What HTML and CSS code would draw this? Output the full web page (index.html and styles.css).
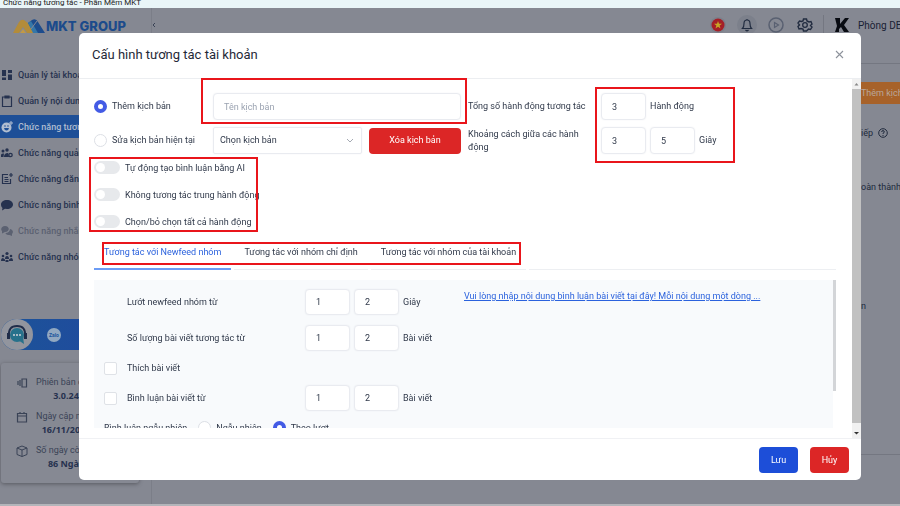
FILE: index.html
```html
<!DOCTYPE html>
<html lang="vi">
<head>
<meta charset="UTF-8">
<meta name="viewport" content="width=device-width, initial-scale=1.0">
<title>Chức năng tương tác - Phần Mềm MKT</title>
<link rel="stylesheet" href="styles.css">
</head>
<body>
<div class="titlebar"><span>Chức năng tương tác - Phần Mềm MKT</span></div>
<div class="app">
<aside class="sidebar">
<div class="logo">
<svg width="32" height="15" viewBox="0 0 32 15"><path d="M0 14L6 3Q8 0 11 1L16 5 21 14H14L10 8 6 14z" fill="#b38c3a"/><path d="M7 14L10 10 13 14z" fill="#c29a45"/><path d="M15 4L19 1Q23-1 25 3L32 14H21z" fill="#1d4c8d"/><path d="M15 4L18 2 25 14H20z" fill="#3577a8"/><path d="M18 10L24 2" stroke="#858892" stroke-width="1"/></svg>
<span>MKT GROUP</span>
</div>
<nav class="menu">
<a href="#"><svg viewBox="0 0 12 12"><path d="M1 1h4v6H1zM7 1h4v3H7zM7 5.500h4V11H7zM1 8.500h4V11H1z" fill="currentColor"/></svg>Quản lý tài khoản</a>
<a href="#"><svg viewBox="0 0 12 12"><path d="M1.500 2h9v9.500h-9zM4 2V1h4v2H4z" fill="none" stroke="currentColor" stroke-width="1.200"/></svg>Quản lý nội dung</a>
<a href="#" class="active"><svg viewBox="0 0 12 12"><circle cx="5.500" cy="6.500" r="5" fill="currentColor"/><path d="M3 7h5q-.5 2.500-2.500 2.500T3 7z" fill="#1e4f97"/><circle cx="4" cy="5" r=".8" fill="#1e4f97"/><circle cx="7" cy="5" r=".8" fill="#1e4f97"/><path d="M10 0v4M8 2h4" stroke="currentColor"/></svg>Chức năng tương tác</a>
<a href="#"><svg viewBox="0 0 12 12"><g fill="currentColor"><circle cx="2" cy="4" r="1.500"/><circle cx="6" cy="3" r="1.700"/><path d="M0 10V8q0-2 3-1.500L2.500 10zM3 10q0-4 4-4l1 4z"/></g><circle cx="9.500" cy="8" r="1.700" fill="none" stroke="currentColor" stroke-width="1.300"/></svg>Chức năng quản lý</a>
<a href="#"><svg viewBox="0 0 12 12"><path d="M7 1.500H1.500v9h8V6M3.500 4.500H7M3.500 6.500h4M3.500 8.500h4M10 0v4M8 2h4" fill="none" stroke="currentColor" stroke-width="1.200"/></svg>Chức năng đăng bài</a>
<a href="#"><svg viewBox="0 0 12 12"><path d="M6 1c3.500 0 6 2 6 4.500S9.500 10 6 10l-2-.3L1 11.500 1.500 9C.5 8 0 7 0 5.500 0 3 2.500 1 6 1z" fill="currentColor"/></svg>Chức năng bình luận</a>
<a href="#" class="disabled"><svg viewBox="0 0 12 12"><path d="M4 1c5 0 5 6 0 6L1 8.500 1 6C-1 4 1 1 4 1z" fill="currentColor"/><path d="M9 4c4 1 3 4 2 5v2L8.500 10Q5 10 4.500 8 8.500 8 9 4z" fill="currentColor"/></svg>Chức năng nhắn tin</a>
<a href="#"><svg viewBox="0 0 12 12"><g fill="currentColor"><circle cx="6" cy="2.500" r="1.600"/><circle cx="2" cy="5" r="1.300"/><circle cx="10" cy="5" r="1.300"/><path d="M4 8q0-3 2-3t2 3zM0 10q0-3 2-3l2 1.500V10zM12 10q0-3-2-3L8 8.500V10zM4.500 9h3v2h-3z"/></g></svg>Chức năng nhóm</a>
</nav>
<div class="contact">
<span class="support"><svg width="22" height="22" viewBox="0 0 22 22"><path d="M3 12Q2 2 11 2t8 10" fill="none" stroke="#202d49" stroke-width="2"/><circle cx="11" cy="11" r="7" fill="#27718b"/><path d="M12 16l6 4-1-7z" fill="#27718b"/><path d="M1 9h3v6H1zM18 9h3v6h-3z" fill="#202d49"/><path d="M7 11h2M10 11h2M13 11h2" stroke="#a6b9c4" stroke-width="2"/></svg></span>
<span class="zalo">Zalo</span>
</div>
<dl class="info">
<div><dt><svg viewBox="0 0 12 12"><path d="M6 2h4.500v8H6zM4 3v6M2 4v4" fill="none" stroke="currentColor" stroke-width="1.200"/></svg>Phiên bản của bạn</dt><dd>3.0.24</dd></div>
<div><dt><svg viewBox="0 0 12 12"><path d="M1.500 2.500h9v8.500h-9zM1.500 5h9M4 1v2M8 1v2" fill="none" stroke="currentColor" stroke-width="1.200"/></svg>Ngày cập nhật</dt><dd>16/11/2023</dd></div>
<div><dt><svg viewBox="0 0 12 12"><path d="M1 3l5-2 5 2v6.500L6 11.500 1 9.500zM1 3l5 2 5-2M6 5v6.500" fill="none" stroke="currentColor"/></svg>Số ngày còn lại</dt><dd>86 Ngày</dd></div>
</dl>
</aside>
<main class="content">
<header class="topbar">
<span class="collapse"><svg width="4" height="6" viewBox="0 0 4 6"><path d="M3 1L1 3l2 2" fill="none" stroke="#3a4356"/></svg></span>
<div class="actions">
<svg viewBox="0 0 20 20"><circle cx="10" cy="10" r="8" fill="#7c808b"/><circle cx="10" cy="10" r="6.500" fill="#a51f27"/><path d="M10 6l1 2.800h3l-2.400 1.700.9 2.900L10 11.700l-2.500 1.700.9-2.900L6 8.800h3z" fill="#c7a625"/></svg>
<svg viewBox="0 0 20 20"><circle cx="10" cy="10" r="10" fill="#7c808b"/><path d="M5.500 13.500q1.500-1.500 1.500-5Q7 5 10 5t3 3.500q0 3.500 1.500 5zM8.500 15q1.500 1.500 3 0M10 4v1" fill="none" stroke="#222c40" stroke-width="1.200"/></svg>
<svg viewBox="0 0 20 20"><circle cx="10" cy="10" r="7" fill="none" stroke="#596071" stroke-width="1.500"/><path d="M8.500 7.500l4 2.500-4 2.500z" fill="none" stroke="#596071" stroke-width="1.200"/></svg>
<svg viewBox="0 0 20 20"><path d="M8.500 4h3l.5 2 2 1 2-.5 1 2.500-1.500 1.500L17 12l-1.500 2.500-2-.5L11.500 16h-3L8 14l-2-.5-2 .5L3 11.500 4.500 10 3 8l1.500-2 2 .5 1.500-.5z" fill="none" stroke="#222c40" stroke-width="1.400"/><circle cx="10" cy="10" r="2.300" fill="none" stroke="#222c40" stroke-width="1.300"/></svg>
</div>
<div class="account">
<svg width="14" height="16" viewBox="0 0 14 16"><path d="M0 1h5v6l5-6h4L9 8l5 7h-5L6 10l-2 2v3H0l2-6z" fill="#080b12"/></svg>
<span>Phòng DEV</span>
</div>
</header>
<div class="page">
<button class="add">Thêm kịch bản</button>
<p class="step">iếp <svg width="10" height="10" viewBox="0 0 10 10"><circle cx="5" cy="5" r="4.300" fill="none" stroke="currentColor"/><path d="M3.700 4q0-1.400 1.300-1.400T6.300 4Q6.300 4.700 5 5.300V6M5 7v1" fill="none" stroke="currentColor"/></svg></p>
<p class="state">oàn thành</p>
<p class="cell">n</p>
</div>
</main>
</div>

<div class="overlay">
<section class="modal" role="dialog" aria-labelledby="modalTitle">
<header class="modal-header">
<h1 id="modalTitle">Cấu hình tương tác tài khoản</h1>
<button class="close" aria-label="Đóng"><svg width="9" height="9" viewBox="0 0 9 9"><path d="M1 1l7 7M8 1L1 8" stroke="#8d929b" stroke-width="1.100"/></svg></button>
</header>
<div class="modal-body">
<div class="form">
<div class="script-grid">
<label class="choice"><input type="radio" name="mode" checked>Thêm kịch bản</label>
<div class="name-field marked"><input class="text" type="text" placeholder="Tên kịch bản" aria-label="Tên kịch bản"></div>
<label for="total">Tổng số hành động tương tác</label>
<div class="numbers limits marked"><input class="text" id="total" type="text" value="3"><span>Hành động</span></div>
<label class="choice"><input type="radio" name="mode">Sửa kịch bản hiện tại</label>
<div class="pick">
<select aria-label="Chọn kịch bản"><option>Chọn kịch bản</option></select>
<button class="btn red">Xóa kịch bản</button>
</div>
<label for="delayFrom">Khoảng cách giữa các hành động</label>
<div class="numbers"><input class="text" id="delayFrom" type="text" value="3"><input class="text" type="text" value="5" aria-label="Khoảng cách đến"><span>Giây</span></div>
</div>
<div class="switches marked">
<label><input type="checkbox" class="switch">Tự động tạo bình luận bằng AI</label>
<label><input type="checkbox" class="switch">Không tương tác trung hành động</label>
<label><input type="checkbox" class="switch">Chọn/bỏ chọn tất cả hành động</label>
</div>
<div class="tabs marked" role="tablist">
<button role="tab" class="selected" aria-selected="true">Tương tác với Newfeed nhóm</button>
<button role="tab">Tương tác với nhóm chỉ định</button>
<button role="tab">Tương tác với nhóm của tài khoản</button>
<span class="rest"></span>
</div>
<div class="panel-wrap">
<div class="panel">
<div class="settings">
<div class="setting"><i></i><label for="feed">Lướt newfeed nhóm từ</label><div class="numbers"><input class="text" id="feed" type="text" value="1"><input class="text" type="text" value="2" aria-label="Lướt newfeed nhóm đến"><span>Giây</span></div></div>
<div class="setting"><i></i><label for="posts">Số lượng bài viết tương tác từ</label><div class="numbers"><input class="text" id="posts" type="text" value="1"><input class="text" type="text" value="2" aria-label="Số lượng bài viết đến"><span>Bài viết</span></div></div>
<div class="setting short"><input type="checkbox" id="like"><label for="like">Thích bài viết</label></div>
<div class="setting"><input type="checkbox" id="comment"><label for="comment">Bình luận bài viết từ</label><div class="numbers"><input class="text" type="text" value="1" aria-label="Bình luận từ"><input class="text" type="text" value="2" aria-label="Bình luận đến"><span>Bài viết</span></div></div>
<div class="order"><span>Bình luận ngẫu nhiên</span><label><input type="radio" name="order">Ngẫu nhiên</label><label><input type="radio" name="order" checked>Theo lượt</label></div>
</div>
<a href="#" class="hint">Vui lòng nhập nội dung bình luận bài viết tại đây! Mỗi nội dung một dòng ...</a>
</div>
<div class="panel-thumb"></div>
</div>
</div>
<div class="scrollbar">
<svg viewBox="0 0 9 9"><path d="M2.500 6L4.500 3.500 6.500 6z" fill="#888"/></svg>
<div class="thumb"></div>
<svg viewBox="0 0 9 9"><path d="M2 3.500h5L4.500 6z" fill="#333"/></svg>
</div>
</div>
<footer class="modal-footer">
<button class="btn blue">Lưu</button>
<button class="btn red">Hủy</button>
</footer>
</section>
</div>
</body>
</html>
```
FILE: styles.css
```css
*, *::before, *::after {
    box-sizing: border-box;
}
body {
    margin: 0;
    height: 100vh;
    display: flex;
    flex-direction: column;
    overflow: hidden;
    font-family: Roboto, "Noto Sans", sans-serif;
    font-size: 9px;
    color: #30394a;
    background-color: #858892;
}
input, button, select {
    font: inherit;
    color: inherit;
    margin: 0;
}
button {
    border: none;
    background: none;
    padding: 0;
    cursor: pointer;
}
p, dl, dd, h1 {
    margin: 0;
}

/* window title */
.titlebar {
    height: 8px;
    display: flex;
    align-items: flex-end;
    padding-left: 3px;
    overflow: hidden;
    background-color: #e9f5f8;
    color: #222;
    font-size: 8px;
    line-height: 10px;
}
.app {
    flex: 1;
    display: flex;
    min-height: 0;
    border-bottom: 2px solid #b3b5ba;
}

/* sidebar */
.sidebar {
    width: 152px;
    flex-shrink: 0;
    border-right: 1px solid #7b7e88;
    color: #26324f;
}
.logo {
    display: flex;
    align-items: center;
    height: 36px;
    padding-left: 13px;
    gap: 1px;
    font-family: Inter, sans-serif;
    font-size: 13px;
    font-weight: 800;
    color: #1c4b8b;
    white-space: nowrap;
}
.menu {
    display: flex;
    flex-direction: column;
    gap: 3px;
    padding-top: 19px;
}
.menu a {
    display: flex;
    align-items: center;
    height: 23px;
    gap: 5px;
    padding-left: 1px;
    color: #26324f;
    font-weight: 500;
    text-decoration: none;
    white-space: nowrap;
}
.menu svg {
    width: 12px;
    height: 12px;
}
.menu a.active {
    background-color: #1e4f97;
    color: #b0bdd0;
}
.menu a.disabled {
    color: #5b6171;
}
.contact {
    display: flex;
    align-items: center;
    gap: 14px;
    width: 138px;
    height: 31px;
    margin: 51px 0 0 1px;
    border-radius: 16px;
    background: linear-gradient(90deg, #1c5398, #2148a0);
}
.support {
    display: flex;
    align-items: center;
    justify-content: center;
    width: 32px;
    height: 31px;
    border-radius: 50%;
    background-color: #92959e;
}
.zalo {
    width: 14px;
    height: 14px;
    border-radius: 50%;
    background-color: #91a8c1;
    color: #20559c;
    font-size: 5px;
    font-weight: bold;
    line-height: 14px;
    text-align: center;
}
.info {
    display: flex;
    flex-direction: column;
    gap: 7px;
    width: 138px;
    margin: 13px 0 0 1px;
    padding: 13px 0 12px 15px;
    border-radius: 3px;
    background-color: #868993;
    box-shadow: 0 1px 4px rgba(0, 0, 0, 0.35);
    line-height: 13px;
}
.info dt {
    display: flex;
    align-items: center;
    gap: 8px;
    color: #3a4356;
    white-space: nowrap;
}
.info svg {
    width: 12px;
    height: 12px;
}
.info dd {
    padding-right: 23px;
    font-family: "Noto Sans", sans-serif;
    font-weight: bold;
    text-align: center;
    line-height: 14px;
}

/* page behind the modal */
.content {
    flex: 1;
    display: flex;
    flex-direction: column;
}
.topbar {
    display: flex;
    height: 56px;
    border-bottom: 1px solid #747781;
    padding-top: 7px;
}
.collapse {
    flex: 1;
    line-height: 20px;
}
.actions {
    display: flex;
    gap: 9px;
    padding-right: 8px;
    height: 20px;
}
.actions svg {
    width: 20px;
    height: 20px;
}
.account {
    display: flex;
    align-items: center;
    gap: 9px;
    width: 77px;
    height: 20px;
    padding-left: 11px;
    border-left: 1px solid #747781;
    font-size: 10px;
    color: #182033;
    white-space: nowrap;
    overflow: hidden;
}
.account svg {
    flex-shrink: 0;
}
.page {
    align-self: flex-end;
    display: flex;
    flex-direction: column;
    width: 39px;
    height: 391px;
    padding-top: 18px;
    border-bottom: 1px solid #747781;
    white-space: nowrap;
    overflow: hidden;
    color: #202a3d;
}
.add {
    height: 22px;
    background-color: #a7622a;
    color: #b9a79b;
    text-align: left;
}
.step {
    display: flex;
    align-items: center;
    gap: 5px;
    height: 57px;
}
.state {
    height: 52px;
    line-height: 52px;
}
.cell {
    margin-top: 82px;
    line-height: 22px;
}

/* modal */
.overlay {
    position: fixed;
    inset: 0;
    display: flex;
    padding: 33px 39px 26px 79px;
}
.modal {
    flex: 1;
    display: flex;
    flex-direction: column;
    min-width: 0;
    border-radius: 5px;
    background-color: #fff;
}
.modal-header {
    display: flex;
    justify-content: space-between;
    align-items: center;
    height: 46px;
    padding: 0 17px 2px 13px;
    border-bottom: 1px solid #eceef1;
}
.modal-header h1 {
    font-size: 13px;
    font-weight: 400;
    color: #1f2937;
}
.close {
    display: flex;
}
.modal-body {
    flex: 1;
    display: flex;
    min-height: 0;
}
.form {
    flex: 1;
    display: flex;
    flex-direction: column;
    min-width: 0;
    padding: 14px 16px 10px 15px;
}
.scrollbar {
    width: 9px;
    display: flex;
    flex-direction: column;
    background-color: #f1f1f1;
}
.scrollbar svg {
    width: 9px;
    height: 10px;
}
.scrollbar .thumb {
    flex: 1;
    margin-bottom: 5px;
    background-color: #c1c1c1;
}

/* red frames */
.marked {
    position: relative;
}
.marked::after {
    content: "";
    position: absolute;
    border: 2px solid #e9151b;
    pointer-events: none;
}
.name-field::after {
    inset: -15px -6px -4px -12px;
}
.limits::after {
    inset: -6px auto -43px -6px;
    width: 140px;
}
.switches::after {
    inset: 3px auto 3px -5px;
    width: 169px;
}
.tabs::after {
    inset: 7px auto 5px 8px;
    width: 419px;
}

/* form controls */
.text, select {
    height: 27px;
    border: 1px solid #e9ebf0;
    border-radius: 4px;
    background-color: #fff;
    box-shadow: 0 0 2px rgba(40, 50, 80, 0.06);
}
.text {
    width: 45px;
    padding: 0 10px;
}
.text::placeholder {
    color: #9ba3b1;
    opacity: 1;
}
select {
    flex: 1;
    padding: 0 6px;
    border-radius: 2px;
    appearance: none;
    background: #fff url("data:image/svg+xml,%3Csvg xmlns='http://www.w3.org/2000/svg' width='8' height='6'%3E%3Cpath d='M1 1l3 3 3-3' fill='none' stroke='%23a5aab3'/%3E%3C/svg%3E") no-repeat right 7px center;
}
input[type="radio"] {
    appearance: none;
    flex-shrink: 0;
    width: 13px;
    height: 13px;
    border: 1px solid #dcdfe5;
    border-radius: 50%;
    background-color: #fff;
}
input[type="radio"]:checked {
    border: 4px solid #435be5;
}
.setting input[type="checkbox"] {
    appearance: none;
    width: 13px;
    height: 13px;
    border: 1px solid #dfe2e7;
    border-radius: 2px;
    background-color: #fff;
}
.switch {
    appearance: none;
    display: flex;
    width: 26px;
    height: 13px;
    padding: 2px;
    border-radius: 7px;
    background-color: #e7e9ec;
}
.switch::before {
    content: "";
    width: 9px;
    height: 9px;
    border-radius: 50%;
    background-color: #fff;
}
.btn {
    height: 26px;
    border-radius: 4px;
    color: #fff;
}
.red {
    background-color: #dc2626;
}
.blue {
    background-color: #1d4ed8;
}
.script-grid {
    display: grid;
    grid-template-columns: 112px 248px 126px 1fr;
    column-gap: 7px;
    row-gap: 7px;
    align-items: center;
    line-height: 13px;
}
.choice {
    display: flex;
    align-items: center;
    gap: 5px;
}
.name-field .text {
    display: block;
    width: 100%;
}
.pick {
    display: flex;
    align-items: center;
    gap: 7px;
}
.pick .btn {
    width: 92px;
}
.numbers {
    display: flex;
    align-items: center;
    gap: 4px;
}
.switches {
    display: flex;
    flex-direction: column;
}
.switches label {
    display: flex;
    align-items: center;
    gap: 5px;
    height: 27px;
}

/* tabs */
.tabs {
    display: flex;
    align-items: stretch;
    gap: 3px;
    height: 35px;
}
.tabs button {
    padding: 0 10px;
    border-bottom: 1px solid #edeff2;
}
.tabs .selected {
    border-bottom: 2px solid #6c9cf5;
    color: #2b62dd;
}
.rest {
    flex: 1;
    border-bottom: 1px solid #edeff2;
}
.panel-wrap {
    flex: 1;
    display: flex;
    min-height: 0;
    margin-top: 10px;
}
.panel {
    flex: 1;
    display: flex;
    overflow: hidden;
    padding: 9px 10px 0;
    background-color: #f8fafc;
}
.panel-thumb {
    width: 3px;
    height: 75%;
    background-color: #d3d5d8;
}
.settings {
    width: 360px;
    display: flex;
    flex-direction: column;
    gap: 10px;
}
.setting {
    display: grid;
    grid-template-columns: 23px 178px 1fr;
    align-items: center;
    min-height: 26px;
}
.setting .text {
    height: 26px;
}
.setting.short {
    min-height: 14px;
}
.order {
    display: flex;
    align-items: center;
    gap: 11px;
    height: 14px;
}
.order label {
    display: flex;
    align-items: center;
    gap: 5px;
}
.hint {
    color: #2b62dd;
    line-height: 14px;
}

.modal-footer {
    display: flex;
    justify-content: flex-end;
    gap: 12px;
    height: 42px;
    padding: 8px 12px;
    border-top: 1px solid #f0f1f4;
}
.modal-footer .btn {
    width: 39px;
}
```
